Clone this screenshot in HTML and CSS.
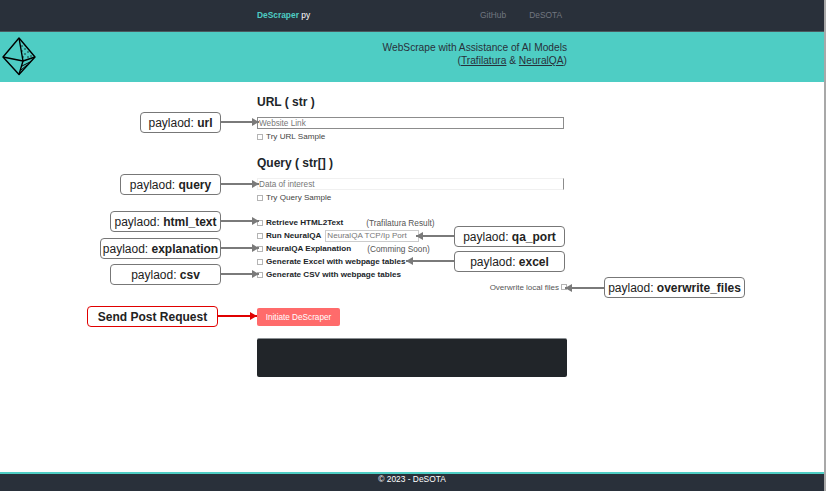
FILE: index.html
```html
<!DOCTYPE html>
<html lang="en">
<head>
  <meta charset="UTF-8">
  <meta name="viewport" content="width=device-width, initial-scale=1.0">
  <title>DeScraper.py</title>
  <link rel="stylesheet" href="styles.css">
</head>
<body>
  <nav class="topbar">
    <a class="brand" href="#"><span class="brand-name">DeScraper</span> py</a>
    <div class="nav-links">
      <a href="#">GitHub</a>
      <a href="#">DeSOTA</a>
    </div>
  </nav>

  <header class="banner">
    <svg class="logo" viewBox="0 0 36 40" fill="none" stroke="#000" stroke-width="1.4" stroke-linejoin="round">
      <path d="M18 1 L34 20 L18 37.500 L2 20 Z"/>
      <path d="M18 1 L22 24 L18 37.500"/>
      <path d="M2 20 L22 24 L34 20"/>
      <path d="M21 29 L30 24.500 M20 33 L26 28" stroke-width="1"/>
      <g fill="#000" stroke="none">
        <circle cx="21" cy="9" r=".7"/><circle cx="24" cy="12" r=".7"/><circle cx="21" cy="14" r=".7"/>
        <circle cx="27" cy="15" r=".7"/><circle cx="24" cy="17" r=".7"/><circle cx="30" cy="19" r=".7"/>
        <circle cx="27" cy="20" r=".7"/><circle cx="22" cy="20" r=".7"/>
      </g>
    </svg>
    <div class="tagline">
      <div>WebScrape with Assistance of AI Models</div>
      <div>(<a href="#">Trafilatura</a> &amp; <a href="#">NeuralQA</a>)</div>
    </div>
  </header>

  <main class="page">
    <form class="form">
      <h2>URL ( str )</h2>
      <input class="text-input url-input" type="text" placeholder="Website Link">
      <label class="sample"><span class="box"></span>Try URL Sample</label>

      <h2 class="query-title">Query ( str[] )</h2>
      <input class="text-input query-input" type="text" placeholder="Data of interest">
      <label class="sample"><span class="box"></span>Try Query Sample</label>

      <div class="options">
        <div class="option"><span class="box"></span><b>Retrieve HTML2Text</b><span class="note note-a">(Trafilatura Result)</span></div>
        <div class="option"><span class="box"></span><b>Run NeuralQA</b><input class="port-input" type="text" placeholder="NeuralQA TCP/Ip Port"></div>
        <div class="option"><span class="box"></span><b>NeuralQA Explanation</b><span class="note note-b">(Comming Soon)</span></div>
        <div class="option"><span class="box"></span><b>Generate Excel with webpage tables</b></div>
        <div class="option"><span class="box"></span><b>Generate CSV with webpage tables</b></div>
      </div>

      <div class="overwrite">Overwrite local files<span class="box"></span></div>

      <button class="start" type="button">Initiate DeScraper</button>
      <div class="output"></div>
    </form>

    <!-- anotaciones sobre el formulario -->
    <div class="tag tag-url">paylaod:&nbsp;<b>url</b></div>
    <div class="tag tag-query">paylaod:&nbsp;<b>query</b></div>
    <div class="tag tag-html">paylaod:&nbsp;<b>html_text</b></div>
    <div class="tag tag-expl">paylaod:&nbsp;<b>explanation</b></div>
    <div class="tag tag-csv">paylaod:&nbsp;<b>csv</b></div>
    <div class="tag tag-port">paylaod:&nbsp;<b>qa_port</b></div>
    <div class="tag tag-excel">paylaod:&nbsp;<b>excel</b></div>
    <div class="tag tag-over">paylaod:&nbsp;<b>overwrite_files</b></div>
    <div class="tag tag-send"><b>Send Post Request</b></div>

    <div class="arrow right arrow-url"></div>
    <div class="arrow right arrow-query"></div>
    <div class="arrow right arrow-html"></div>
    <div class="arrow right arrow-expl"></div>
    <div class="arrow right arrow-csv"></div>
    <div class="arrow left arrow-port"></div>
    <div class="arrow left arrow-excel"></div>
    <div class="arrow left arrow-over"></div>
    <div class="arrow right red arrow-send"></div>
  </main>

  <footer class="footer">© 2023 - DeSOTA</footer>
</body>
</html>
```

FILE: styles.css
```css
/* General */
html, body {
  height: 100%;
}

body {
  margin: 0;
  display: flex;
  flex-direction: column;
  min-height: 491px;
  box-sizing: border-box;
  border-right: 2px solid #a8a8a8; /* scrollbar edge */
  font-family: "Liberation Sans", Arial, sans-serif;
  background-color: #fff;
  color: #212529;
  overflow: hidden;
}

/* Top bar */
.topbar {
  display: flex;
  align-items: center;
  height: 29px;
  padding-left: 257px;
  padding-bottom: 2px;
  background-color: #29303a;
  border-bottom: 1px solid #4b5a60;
  font-size: 8.400px;
}

.topbar a {
  text-decoration: none;
}

.brand {
  color: #fff;
}

.brand-name {
  color: #4ecdc4;
  font-weight: bold;
}

.nav-links {
  display: flex;
  gap: 23px;
  margin-left: 170px;
}

.nav-links a {
  color: #727780;
}

/* Banner */
.banner {
  display: flex;
  justify-content: space-between;
  height: 50px;
  padding-right: 257px;
  background-color: #4ecdc4;
  color: #29303a;
  font-size: 10.200px;
  line-height: 13px;
}

.banner a {
  color: #29303a;
}

.logo {
  width: 36px;
  height: 40px;
  margin-top: 5px;
  margin-left: 1px;
}

.tagline {
  padding-top: 9px;
  text-align: right;
}

/* Form */
.page {
  position: relative;
  flex: 1;
  padding-left: 257px;
}

.form {
  width: 310px;
}

h2 {
  margin: 0;
  padding-top: 13px;
  font-size: 12px;
  line-height: 14px;
  font-weight: bold;
}

.query-title {
  padding-top: 13px;
}

.text-input {
  display: block;
  box-sizing: border-box;
  width: 307px;
  height: 12px;
  margin-top: 8px;
  margin-bottom: 1px;
  padding: 0 1px;
  border: 1px solid #8c8c8c;
  border-radius: 0;
  outline: none;
  font-family: inherit;
  font-size: 8.200px;
}

.query-input {
  border-color: #f0f0f0;
  border-right-color: #8c8c8c;
}

.text-input::placeholder,
.port-input::placeholder {
  color: #777;
  opacity: 1;
}

.sample {
  display: flex;
  align-items: center;
  height: 13px;
  font-size: 8.100px;
  color: #444;
}

.box {
  display: inline-block;
  box-sizing: border-box;
  width: 6px;
  height: 6px;
  margin-right: 3px;
  border: 1px solid #b4b4b4;
  flex-shrink: 0;
}

.options {
  margin-top: 12px;
}

.option {
  display: flex;
  align-items: center;
  height: 13px;
  font-size: 8.100px;
  color: #212529;
}

.note {
  color: #555;
  font-size: 8.300px;
}

.note-a {
  margin-left: 23px;
}

.note-b {
  margin-left: 16px;
}

.port-input {
  box-sizing: border-box;
  width: 94px;
  height: 12px;
  margin-left: 4px;
  padding: 0 1px;
  border: 1px solid #ccc;
  border-radius: 0;
  outline: none;
  font-family: inherit;
  font-size: 8.100px;
}

.overwrite {
  display: flex;
  align-items: center;
  justify-content: flex-end;
  height: 12px;
  font-size: 8px;
  color: #555;
}

.overwrite .box {
  margin-left: 2px;
  margin-right: 0;
}

.start {
  display: block;
  width: 83px;
  height: 18px;
  margin-top: 15px;
  padding: 0;
  border: none;
  border-radius: 2px;
  background-color: #ff6b6b;
  color: #fff;
  font-family: inherit;
  font-size: 8.200px;
}

.output {
  width: 310px;
  height: 39px;
  margin-top: 12px;
  background-color: #212529;
  border-top: 1px solid #8a8f93;
  box-sizing: border-box;
  border-radius: 2px;
}

/* Annotations */
.tag {
  position: absolute;
  box-sizing: border-box;
  display: flex;
  align-items: center;
  justify-content: center;
  height: 21px;
  background-color: #fff;
  border: 1px solid #777;
  border-radius: 4px;
  color: #222;
  font-size: 12px;
  white-space: nowrap;
}

.tag-url { left: 140px; top: 30px; width: 81px; }
.tag-query { left: 120px; top: 92px; width: 101px; }
.tag-html { left: 110px; top: 129px; width: 111px; }
.tag-expl { left: 100px; top: 156px; width: 121px; }
.tag-csv { left: 110px; top: 182px; width: 111px; }
.tag-port { left: 454px; top: 144px; width: 111px; }
.tag-excel { left: 454px; top: 169px; width: 111px; }
.tag-over { left: 604px; top: 195px; width: 141px; }
.tag-send { left: 87px; top: 224px; width: 131px; border-color: #e00000; }

.arrow {
  position: absolute;
  height: 2px;
  background-color: #7a7a7a;
}

.arrow::after {
  content: "";
  position: absolute;
  top: -3px;
  border-top: 4px solid transparent;
  border-bottom: 4px solid transparent;
}

.arrow.right::after {
  right: 0;
  border-left: 7px solid #7a7a7a;
}

.arrow.left::after {
  left: 0;
  border-right: 7px solid #7a7a7a;
}

.arrow.red {
  background-color: #e00000;
}

.arrow.red::after {
  border-left-color: #e00000;
}

.arrow-url { left: 221px; top: 39px; width: 38px; }
.arrow-query { left: 221px; top: 101px; width: 38px; }
.arrow-html { left: 221px; top: 138px; width: 38px; }
.arrow-expl { left: 221px; top: 165px; width: 38px; }
.arrow-csv { left: 221px; top: 191px; width: 38px; }
.arrow-port { left: 416px; top: 153px; width: 38px; }
.arrow-excel { left: 406px; top: 178px; width: 48px; }
.arrow-over { left: 565px; top: 205px; width: 39px; }
.arrow-send { left: 218px; top: 233px; width: 39px; }

/* Footer */
.footer {
  height: 17px;
  border-top: 2px solid #4ecdc4;
  background-color: #29303a;
  color: #fff;
  font-size: 8.400px;
  line-height: 11px;
  text-align: center;
}
```
